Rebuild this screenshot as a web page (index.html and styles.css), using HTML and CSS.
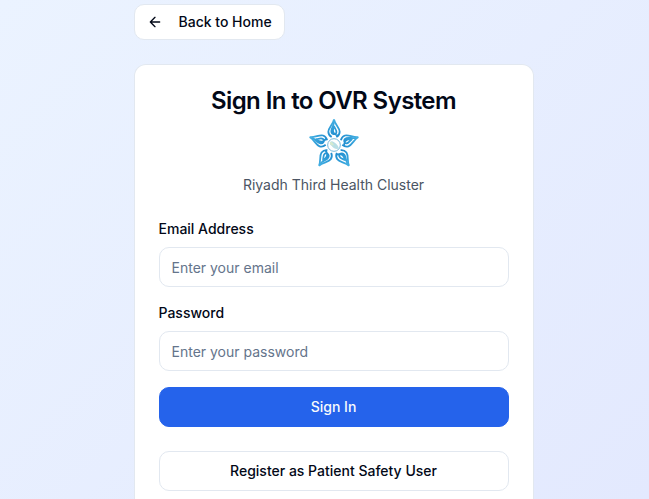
FILE: index.html
```html
<!DOCTYPE html>
<html lang="en">
<head>
<meta charset="utf-8">
<title>Sign In to OVR System</title>
<link rel="stylesheet" href="styles.css">
</head>
<body>
<main class="page">
  <button class="button back" type="button">
    <svg class="arrow" viewBox="0 0 24 24" aria-hidden="true"><path d="m12 19-7-7 7-7M19 12H5"/></svg>
    <span>Back to Home</span>
  </button>
  <section class="card">
    <header class="header">
      <h1 class="title">Sign In to OVR System</h1>
      <svg class="logo" viewBox="-75 -81 150 150" aria-hidden="true">
        <defs>
          <linearGradient id="blue" gradientUnits="userSpaceOnUse" x1="0" y1="-76" x2="0" y2="-22">
            <stop offset="0" stop-color="#43afe2"/>
            <stop offset="1" stop-color="#1e8bce"/>
          </linearGradient>
          <g id="petal" fill="none" stroke="url(#blue)" stroke-width="5.4" stroke-linejoin="round">
            <path d="M0-77C-3-61-17-52-17-40C-17-31-12-27-7-24M0-77C3-61 17-52 17-40C17-31 12-27 7-24"/>
            <path d="M0-70C0-59-8-51-8-42C-8-31 5-30 7-37C9-44 3-49 0-56C-3-49-5-41 0-35C3-31 8-29 12-28"/>
          </g>
        </defs>
        <use href="#petal"/>
        <use href="#petal" transform="rotate(72)"/>
        <use href="#petal" transform="rotate(144)"/>
        <use href="#petal" transform="rotate(216)"/>
        <use href="#petal" transform="rotate(288)"/>
        <circle r="19" fill="#fff" stroke="#5ca9d1" stroke-width="2.5"/>
        <path d="M-12-8C-7-15 1-8 7-3C14 3 13 8 16 10C7 14-1 10-5 5C-8 1-14 0-12-8Z" fill="#b9dfe5"/>
        <path d="M-12-8C-6-12-2-4 0 1C-6 2-14 0-12-8Z" fill="#d5ead0"/>
      </svg>
      <p class="subtitle">Riyadh Third Health Cluster</p>
    </header>
    <form class="form">
      <div class="field">
        <label class="label" for="email">Email Address</label>
        <input class="input" id="email" type="email" placeholder="Enter your email">
      </div>
      <div class="field">
        <label class="label" for="password">Password</label>
        <input class="input" id="password" type="password" placeholder="Enter your password">
      </div>
      <button class="button primary" type="button">Sign In</button>
    </form>
    <button class="button register" type="button">Register as Patient Safety User</button>
  </section>
</main>
</body>
</html>
```
FILE: styles.css
```css
* { box-sizing: border-box; }
html { height: 100%; }
body {
  margin: 0;
  height: 100%;
  font: 14px/20px Inter, "Liberation Sans", sans-serif;
  color: #020817;
  background: linear-gradient(135deg, #ebf3ff, #e3e9fe);
}
.page {
  display: flex;
  flex-direction: column;
  width: 400px;
  height: 100%;
  margin-left: 133.5px;
  padding-top: 4px;
}
.button {
  display: flex;
  align-items: center;
  justify-content: center;
  width: 100%;
  height: 40px;
  padding: 0;
  border: 1px solid #e2e8f0;
  border-radius: 10px;
  background: #fff;
  color: #020817;
  font: inherit;
  font-weight: 500;
}
.back {
  flex: none;
  justify-content: flex-start;
  gap: 15.5px;
  width: 151px;
  height: 36px;
  margin-bottom: 24px;
  padding-left: 12.5px;
}
.arrow {
  width: 16px;
  height: 16px;
  fill: none;
  stroke: currentColor;
  stroke-width: 2;
  stroke-linecap: round;
  stroke-linejoin: round;
}
.card {
  flex: 1;
  min-height: 0;
  padding: 20px 24px 0;
  border: 1px solid #e2e8f0;
  border-bottom: 0;
  border-radius: 12px 12px 0 0;
  background: #fff;
}
.header { display: flex; flex-direction: column; align-items: center; }
.title {
  margin: 0;
  font-size: 24px;
  line-height: 32px;
  font-weight: 600;
  letter-spacing: -0.6px;
}
.logo { width: 50px; height: 50px; margin-top: 1px; }
.subtitle { margin: 7px 0 24px; color: #4b5563; }
.form { display: flex; flex-direction: column; gap: 16px; }
.field { display: flex; flex-direction: column; gap: 8px; }
.label { font-weight: 500; }
.input {
  width: 100%;
  height: 40px;
  padding: 1px 12px 0;
  border: 1px solid #e2e8f0;
  border-radius: 10px;
  background: #fff;
  font: inherit;
}
.input::placeholder { color: #64748b; opacity: 1; }
.primary { border-color: #2563eb; background: #2563eb; color: #f8fafc; }
.register { margin-top: 24px; }
```
